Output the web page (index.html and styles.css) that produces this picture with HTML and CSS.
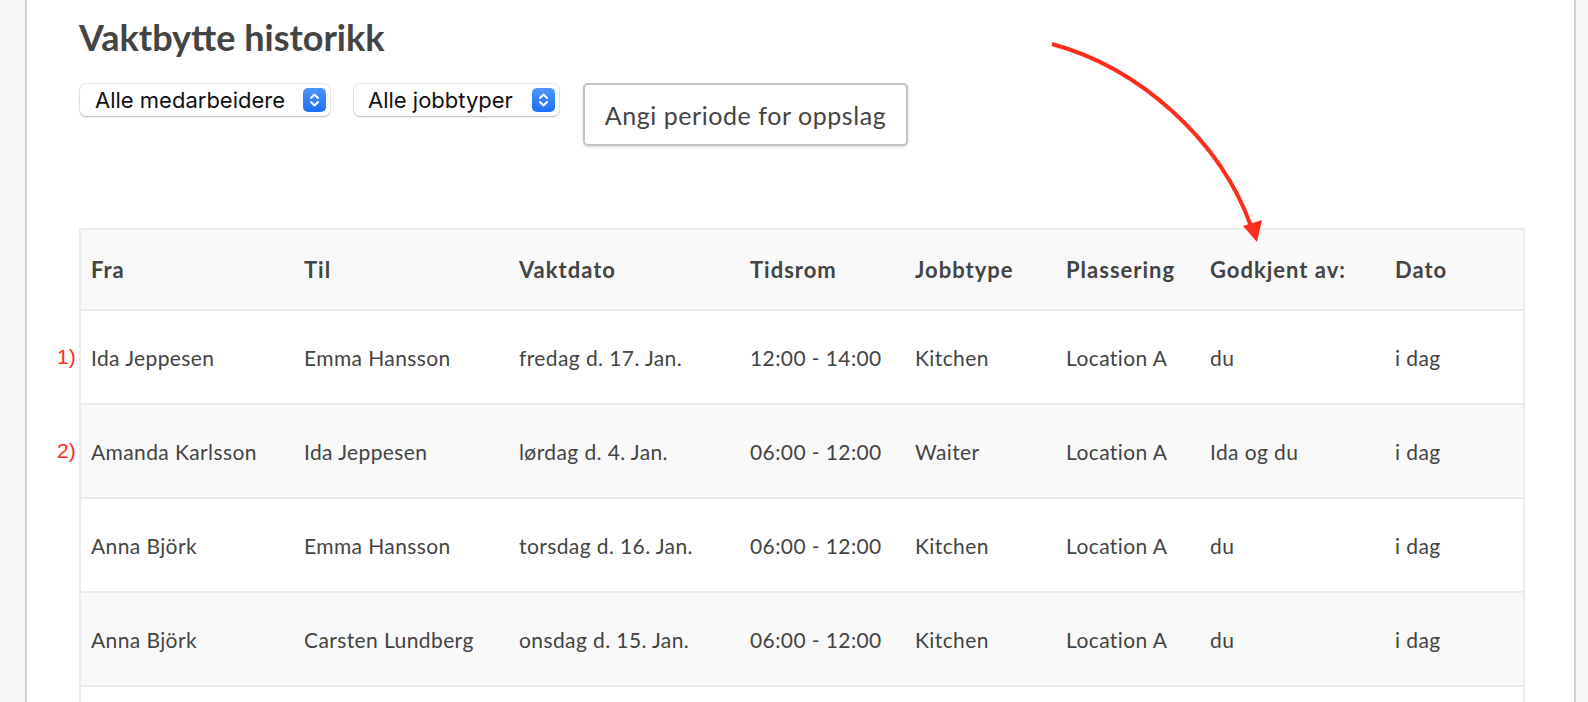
FILE: index.html
```html
<!DOCTYPE html>
<html lang="no">
<head>
<meta charset="utf-8">
<title>Vaktbytte historikk</title>
<link rel="stylesheet" href="styles.css">
</head>
<body>
<div class="page">
  <main class="card">
    <h1 class="title">Vaktbytte historikk</h1>
    <div class="filters">
      <div class="select select-wide">
        <span class="select-label">Alle medarbeidere</span>
        <span class="select-btn"><svg viewBox="0 0 23 24" width="23" height="24"><path d="M8 10 L11.5 6.5 L15 10 M8 14 L11.5 17.5 L15 14" fill="none" stroke="#fff" stroke-width="2" stroke-linecap="round" stroke-linejoin="round"/></svg></span>
      </div>
      <div class="select select-narrow">
        <span class="select-label">Alle jobbtyper</span>
        <span class="select-btn"><svg viewBox="0 0 23 24" width="23" height="24"><path d="M8 10 L11.5 6.5 L15 10 M8 14 L11.5 17.5 L15 14" fill="none" stroke="#fff" stroke-width="2" stroke-linecap="round" stroke-linejoin="round"/></svg></span>
      </div>
      <button class="period-btn" type="button">Angi periode for oppslag</button>
    </div>

    <table class="history">
      <colgroup>
        <col class="c1"><col class="c2"><col class="c3"><col class="c4"><col class="c5"><col class="c6"><col class="c7"><col class="c8">
      </colgroup>
      <thead>
        <tr>
          <th>Fra</th><th>Til</th><th>Vaktdato</th><th>Tidsrom</th><th>Jobbtype</th><th>Plassering</th><th>Godkjent av:</th><th>Dato</th>
        </tr>
      </thead>
      <tbody>
        <tr>
          <td class="first"><span class="note">1)</span>Ida Jeppesen</td><td>Emma Hansson</td><td>fredag d. 17. Jan.</td><td>12:00 - 14:00</td><td>Kitchen</td><td>Location A</td><td>du</td><td>i dag</td>
        </tr>
        <tr>
          <td class="first"><span class="note">2)</span>Amanda Karlsson</td><td>Ida Jeppesen</td><td>lørdag d. 4. Jan.</td><td>06:00 - 12:00</td><td>Waiter</td><td>Location A</td><td>Ida og du</td><td>i dag</td>
        </tr>
        <tr>
          <td class="first">Anna Björk</td><td>Emma Hansson</td><td>torsdag d. 16. Jan.</td><td>06:00 - 12:00</td><td>Kitchen</td><td>Location A</td><td>du</td><td>i dag</td>
        </tr>
        <tr>
          <td class="first">Anna Björk</td><td>Carsten Lundberg</td><td>onsdag d. 15. Jan.</td><td>06:00 - 12:00</td><td>Kitchen</td><td>Location A</td><td>du</td><td>i dag</td>
        </tr>
        <tr class="spacer-row">
          <td></td><td></td><td></td><td></td><td></td><td></td><td></td><td></td>
        </tr>
      </tbody>
    </table>
  </main>
</div>
<svg class="arrow" width="1588" height="702" viewBox="0 0 1588 702" aria-hidden="true">
  <path d="M1052 44 C1140 68 1220 140 1251 226" fill="none" stroke="#ff2d1c" stroke-width="4"/>
  <polygon points="1243,226 1262,220 1257,242" fill="#ff2d1c"/>
</svg>
</body>
</html>
```

FILE: styles.css
```css
html, body {
  margin: 0;
  padding: 0;
  height: 100%;
  overflow: hidden;
}
body {
  background: #f6f6f6;
  font-family: "Lato", "Liberation Sans", sans-serif;
  color: #444;
  position: relative;
}
.page {
  display: flex;
  padding-left: 25px;
  padding-right: 14px;
  height: 100%;
}
.card {
  flex: 1;
  background: #fff;
  border-left: 2px solid #d2d2d2;
  border-right: 2px solid #d2d2d2;
  padding: 0 49px 0 52px;
}
.title {
  margin: 15px 0 0 0;
  font-size: 36px;
  font-weight: 700;
  line-height: 44px;
  color: #444;
}
.filters {
  display: flex;
  align-items: flex-start;
  gap: 24px;
  margin-top: 25px;
  margin-left: 1px;
}
.select {
  height: 32px;
  box-sizing: border-box;
  background: #fff;
  border-radius: 6px;
  box-shadow: 0 0 0 1px rgba(0,0,0,0.07), 0 1px 2px rgba(0,0,0,0.22);
  display: flex;
  align-items: center;
  justify-content: space-between;
  padding: 0 4px 0 15px;
  font-family: "Inter", "Liberation Sans", sans-serif;
  font-size: 22px;
  color: #111;
}
.select-wide { width: 250px; }
.select-narrow { width: 205px; padding-left: 14px; }
.select-btn {
  width: 23px;
  height: 24px;
  border-radius: 5px;
  background: linear-gradient(#4a97fb, #1c6ff3);
  display: flex;
}
.period-btn {
  width: 325px;
  height: 63px;
  margin-top: -1px;
  background: #fff;
  border: 2px solid #c3c3c3;
  border-radius: 5px;
  box-shadow: 0 1px 3px rgba(0,0,0,0.15);
  font-family: "Lato", "Liberation Sans", sans-serif;
  font-size: 25px;
  letter-spacing: 0.55px;
  color: #444;
  padding: 0;
}
.history {
  margin-top: 82px;
  width: 1444px;
  table-layout: fixed;
  border-collapse: collapse;
  border: 2px solid #ebebeb;
  font-size: 21px;
  letter-spacing: 0.4px;
}
.c1 { width: 214px; }
.c2 { width: 215px; }
.c3 { width: 231px; }
.c4 { width: 165px; }
.c5 { width: 151px; }
.c6 { width: 144px; }
.c7 { width: 185px; }
.c8 { width: 139px; }
.history th {
  text-align: left;
  font-weight: 700;
  font-size: 22px;
  letter-spacing: 1px;
  height: 79px;
  padding: 0 0 0 10px;
  background: #f9f9f9;
  border-bottom: 2px solid #ebebeb;
  white-space: nowrap;
}
.history td {
  height: 92px;
  padding: 0 0 0 10px;
  border-bottom: 2px solid #ebebeb;
  white-space: nowrap;
}
.history tbody tr:nth-child(even) td {
  background: #f9f9f9;
}
.history td.first {
  position: relative;
}
.note {
  position: absolute;
  left: -24px;
  color: #ff2a1f;
  font-family: "Liberation Sans", sans-serif;
  font-size: 21px;
  letter-spacing: 0;
}
.arrow {
  position: absolute;
  left: 0;
  top: 0;
  pointer-events: none;
}
```
